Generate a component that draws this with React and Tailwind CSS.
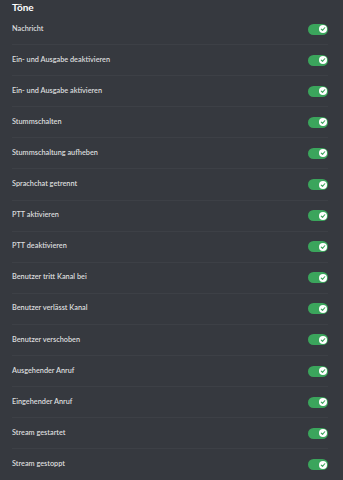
const sounds = [
  'Nachricht',
  'Ein- und Ausgabe deaktivieren',
  'Ein- und Ausgabe aktivieren',
  'Stummschalten',
  'Stummschaltung aufheben',
  'Sprachchat getrennt',
  'PTT aktivieren',
  'PTT deaktivieren',
  'Benutzer tritt Kanal bei',
  'Benutzer verlässt Kanal',
  'Benutzer verschoben',
  'Ausgehender Anruf',
  'Eingehender Anruf',
  'Stream gestartet',
  'Stream gestoppt',
]

// green switch, always on
const Toggle = () => (
  <div className="flex h-[11px] w-[20px] items-center justify-end rounded-full bg-[#3ba55c] pr-[1.5px]">
    <div className="flex h-[8px] w-[8px] items-center justify-center rounded-full bg-white">
      <svg width="6" height="6" viewBox="0 0 12 12" fill="none">
        <path d="M2.5 6.3L5 8.7L9.5 3.5" stroke="#3ba55c" strokeWidth="2.2" strokeLinecap="round" strokeLinejoin="round" />
      </svg>
    </div>
  </div>
)

export default function App() {
  return (
    <div className="h-[480px] w-[343px] overflow-hidden bg-[#36393f] pl-3 pr-[15px] pt-[2px] font-['Lato',sans-serif]">
      <h2 className="h-[12px] text-[10px] font-bold leading-[11px] text-white">Töne</h2>
      <div className="flex flex-col">
        {sounds.map((name, i) => (
          <div
            key={name}
            className={`flex h-[31.1px] items-center justify-between ${i < sounds.length - 1 ? 'border-b border-[#3d4046]' : ''}`}
          >
            <span className="text-[7.3px] font-semibold text-[#dcddde]">{name}</span>
            <Toggle />
          </div>
        ))}
      </div>
    </div>
  )
}
